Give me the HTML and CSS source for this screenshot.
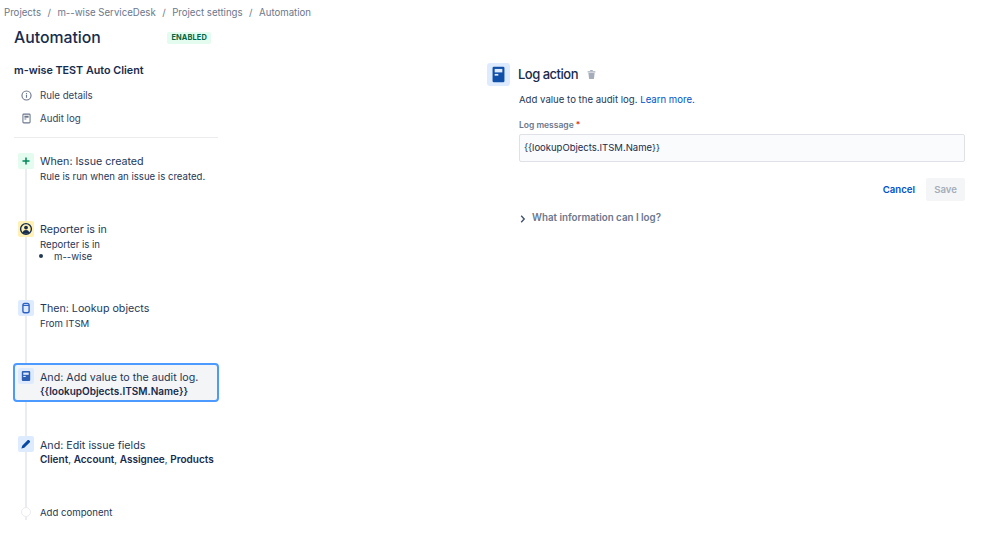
FILE: index.html
```html
<!DOCTYPE html>
<html lang="en">
<head>
<meta charset="utf-8">
<title>Automation</title>
<link rel="stylesheet" href="styles.css">
</head>
<body>
<nav class="crumbs">
  <a>Projects</a><span class="sep">/</span><a>m--wise ServiceDesk</a><span class="sep">/</span><a>Project settings</a><span class="sep">/</span><a>Automation</a>
</nav>
<div class="layout">
  <aside class="side">
    <header class="title-row">
      <h1>Automation</h1>
      <span class="lozenge">ENABLED</span>
    </header>
    <h2 class="rule-name">m-wise TEST Auto Client</h2>
    <ul class="menu">
      <li class="menu-item">
        <svg class="menu-icon" viewBox="0 0 16 16"><circle cx="8" cy="8" r="5.6" fill="none" stroke="#6b778c" stroke-width="1.4"/><rect x="7.3" y="7.2" width="1.4" height="3.6" fill="#6b778c"/><rect x="7.3" y="5" width="1.4" height="1.4" fill="#6b778c"/></svg>
        Rule details
      </li>
      <li class="menu-item">
        <svg class="menu-icon" viewBox="0 0 16 16"><rect x="3.6" y="2.6" width="8.8" height="10.8" rx="1" fill="none" stroke="#6b778c" stroke-width="1.3"/><rect x="5.4" y="4.6" width="5.2" height="2.4" fill="#6b778c"/><rect x="5.4" y="8" width="2.4" height="1.2" fill="#6b778c"/></svg>
        Audit log
      </li>
    </ul>
    <hr class="rule">
    <ol class="flow">
      <li class="step step-when">
        <span class="badge badge-green"><svg viewBox="0 0 16 16"><path d="M8 4.5v7M4.5 8h7" stroke="#00875a" stroke-width="1.5" fill="none"/></svg></span>
        <div class="step-title">When: Issue created</div>
        <div class="step-text">Rule is run when an issue is created.</div>
      </li>
      <li class="step step-cond">
        <span class="badge badge-yellow"><svg viewBox="0 0 16 16"><circle cx="8" cy="8" r="5.4" fill="none" stroke="#172b4d" stroke-width="1.4"/><circle cx="8" cy="6.6" r="1.9" fill="#172b4d"/><path d="M4.6 11.4c.6-1.7 1.8-2.5 3.4-2.5s2.8.8 3.4 2.5c-1 1-2.1 1.4-3.4 1.4s-2.4-.4-3.4-1.4z" fill="#172b4d"/></svg></span>
        <div class="step-title">Reporter is in</div>
        <div class="step-text">Reporter is in</div>
        <ul class="bullets"><li>m--wise</li></ul>
      </li>
      <li class="step step-lookup">
        <span class="badge badge-blue"><svg viewBox="0 0 16 16"><rect x="4.9" y="3.4" width="6.2" height="9.4" rx="1.8" fill="none" stroke="#2f62c0" stroke-width="1.4"/><path d="M5 5.4h6" stroke="#2f62c0" stroke-width="1.2"/></svg></span>
        <div class="step-title">Then: Lookup objects</div>
        <div class="step-text">From ITSM</div>
      </li>
      <li class="step step-log">
        <span class="badge badge-blue"><svg viewBox="0 0 16 16"><rect x="3.8" y="3" width="8.4" height="10" rx="1" fill="#2f5fb3"/><rect x="5.3" y="4.6" width="5.4" height="2.2" fill="#deebff"/><rect x="5.3" y="7.9" width="2.4" height="1.1" fill="#deebff"/></svg></span>
        <div class="step-title">And: Add value to the audit log.</div>
        <div class="step-text"><b>{{lookupObjects.ITSM.Name}}</b></div>
      </li>
      <li class="step step-edit">
        <span class="badge badge-blue"><svg viewBox="0 0 16 16"><path d="M3.4 12.6l.8-2.9 5.6-5.6c.3-.3.8-.3 1.1 0l1 1c.3.3.3.8 0 1.1l-5.6 5.6z" fill="#0747a6"/></svg></span>
        <div class="step-title">And: Edit issue fields</div>
        <div class="step-text"><b>Client</b>, <b>Account</b>, <b>Assignee</b>, <b>Products</b></div>
      </li>
      <li class="step step-add">
        <span class="dot"></span>
        <div class="step-text add-text">Add component</div>
      </li>
    </ol>
  </aside>
  <main class="panel">
    <header class="panel-head">
      <span class="panel-icon"><svg viewBox="0 0 24 24"><rect x="5.8" y="3.8" width="12.4" height="16.4" rx="1.4" fill="#0f4fa8"/><rect x="8" y="6.2" width="8" height="3.6" fill="#deebff"/><rect x="8" y="11.4" width="3.8" height="1.8" fill="#deebff"/></svg></span>
      <h3>Log action</h3>
      <svg class="trash" viewBox="0 0 12 12"><path d="M1.8 2.4h8.4v1.3H1.8zM4.6 1.2h2.8v1H4.6zM2.6 4.4h6.8l-.7 6a.8.8 0 0 1-.8.6H4.1a.8.8 0 0 1-.8-.6z" fill="#a5adba"/></svg>
    </header>
    <div class="panel-body">
      <p class="lead">Add value to the audit log. <a class="link">Learn more.</a></p>
      <label class="field-label">Log message <span class="req">*</span></label>
      <div class="input">{{lookupObjects.ITSM.Name}}</div>
      <div class="actions">
        <button class="btn btn-cancel">Cancel</button>
        <button class="btn btn-save">Save</button>
      </div>
      <div class="disclosure">
        <svg class="chev" viewBox="0 0 8 10"><path d="M2.2 1.8L5.2 5L2.2 8.2" fill="none" stroke="#42526e" stroke-width="1.4"/></svg>
        What information can I log?
      </div>
    </div>
  </main>
</div>
</body>
</html>
```
FILE: styles.css
```css
*, *::before, *::after { box-sizing: border-box; }
html, body { margin: 0; padding: 0; }
body {
  width: 999px;
  height: 549px;
  overflow: hidden;
  background: #fff;
  color: #172b4d;
  font-family: Inter, "Liberation Sans", sans-serif;
  font-size: 9.7px;
}
.crumbs {
  display: flex;
  height: 25px;
  padding: 6px 0 0 4px;
  line-height: 13px;
  color: #6b778c;
  font-size: 9.65px;
}
.sep { padding: 0 6.5px; }
.layout { display: flex; }
.side { width: 204px; margin-left: 14px; flex: none; }
.title-row { display: flex; align-items: center; justify-content: space-between; height: 25px; padding-right: 7px; }
h1 { margin: 0; font-size: 15.8px; font-weight: 500; line-height: 25px; }
.lozenge {
  background: #e3fcef;
  color: #006644;
  font-size: 7.4px;
  font-weight: 700;
  letter-spacing: 0.15px;
  padding: 1.5px 4px;
  border-radius: 2px;
  line-height: 9px;
}
.rule-name { margin: 13px 0 0; font-size: 10.75px; font-weight: 600; line-height: 16px; }
.menu { list-style: none; margin: 5px 0 0; padding: 0 0 0 6px; }
.menu-item { display: flex; align-items: center; gap: 7px; height: 23px; color: #344563; font-size: 9.7px; }
.menu-icon { width: 13px; height: 13px; flex: none; }
.rule { border: 0; border-top: 1px solid #ebecf0; margin: 7px 0 0; }
.flow {
  list-style: none;
  margin: 15px 0 0;
  padding: 0;
  position: relative;
}
.flow::before {
  content: "";
  position: absolute;
  left: 11px;
  top: 8px;
  bottom: 6px;
  width: 2px;
  background: #ebecf0;
}
.step { position: relative; padding: 1px 0 0 26px; }
.step-when { height: 68px; }
.step-cond { height: 79px; }
.step-lookup { height: 68px; }
.step-log { height: 68px; padding-top: 2px; }
.step-edit { height: 70px; padding-top: 2px; }
.step-add { height: 20px; padding-top: 0; }
.step-log .step-text, .step-edit .step-text { margin-top: -1px; }
.step-log::before {
  content: "";
  position: absolute;
  left: -1px;
  top: -5px;
  width: 206px;
  height: 39px;
  background: #f4f5f7;
  border: 2px solid #4c9aff;
  border-radius: 4px;
}
.step > * { position: relative; }
.step > .badge, .step > .dot { position: absolute; }
.badge {
  left: 4px;
  top: 0;
  width: 16px;
  height: 16px;
  border-radius: 2px;
  display: flex;
}
.badge svg { width: 16px; height: 16px; }
.badge-green { background: #e3fcef; }
.badge-yellow { background: #fff0b3; }
.badge-blue { background: #deebff; }
.dot {
  left: 7px;
  top: 1px;
  width: 10px;
  height: 10px;
  border-radius: 50%;
  background: #fff;
  border: 1px solid #ebecf0;
}
.step-title { font-size: 10.7px; line-height: 16px; color: #253858; }
.step-text { font-size: 9.6px; line-height: 13px; color: #253858; }
.step-text b { font-weight: 600; font-size: 10px; color: #172b4d; }
.add-text { line-height: 13px; }
.bullets { margin: -2px 0 0; padding: 0 0 0 14px; font-size: 9.6px; line-height: 12px; color: #253858; list-style: disc; }
.bullets li::marker { font-size: 13px; }
.panel { margin-left: 269px; width: 479px; padding-top: 25px; flex: none; }
.panel-head { display: flex; align-items: center; height: 23px; margin-top: 13px; }
.panel-icon { width: 23px; height: 23px; background: #deebff; border-radius: 3px; display: flex; flex: none; }
.panel-icon svg { width: 23px; height: 23px; }
h3 { margin: 0 0 2px 8px; font-size: 13px; font-weight: 500; letter-spacing: -0.5px; line-height: 20px; }
.trash { width: 11px; height: 11px; margin-left: 8px; }
.panel-body { padding-left: 32px; }
.lead { margin: 7px 0 0; font-size: 9.6px; line-height: 14px; color: #253858; }
.link { color: #0052cc; }
.field-label { display: block; margin-top: 12px; font-size: 8.5px; font-weight: 600; line-height: 12px; color: #6b778c; }
.req { color: #de350b; }
.input {
  margin-top: 3px;
  height: 28px;
  width: 446px;
  padding: 0 4px;
  background: #fafbfc;
  border: 1px solid #dfe1e6;
  border-radius: 2px;
  font-size: 9.5px;
  line-height: 26px;
  color: #172b4d;
}
.actions { display: flex; justify-content: flex-end; align-items: center; gap: 11px; width: 446px; margin-top: 16px; }
.btn { border: 0; border-radius: 2px; font-family: inherit; font-size: 9.6px; font-weight: 500; height: 23px; padding: 0; background: none; }
.btn-cancel { color: #0052cc; font-weight: 600; }
.btn-save { width: 39px; background: #f4f5f7; color: #a5adba; font-weight: 600; }
.disclosure { display: flex; align-items: center; margin-top: 10px; font-size: 9.75px; font-weight: 600; line-height: 14px; color: #6b778c; }
.chev { width: 8px; height: 10px; margin-right: 5px; margin-top: 2px; }
```
